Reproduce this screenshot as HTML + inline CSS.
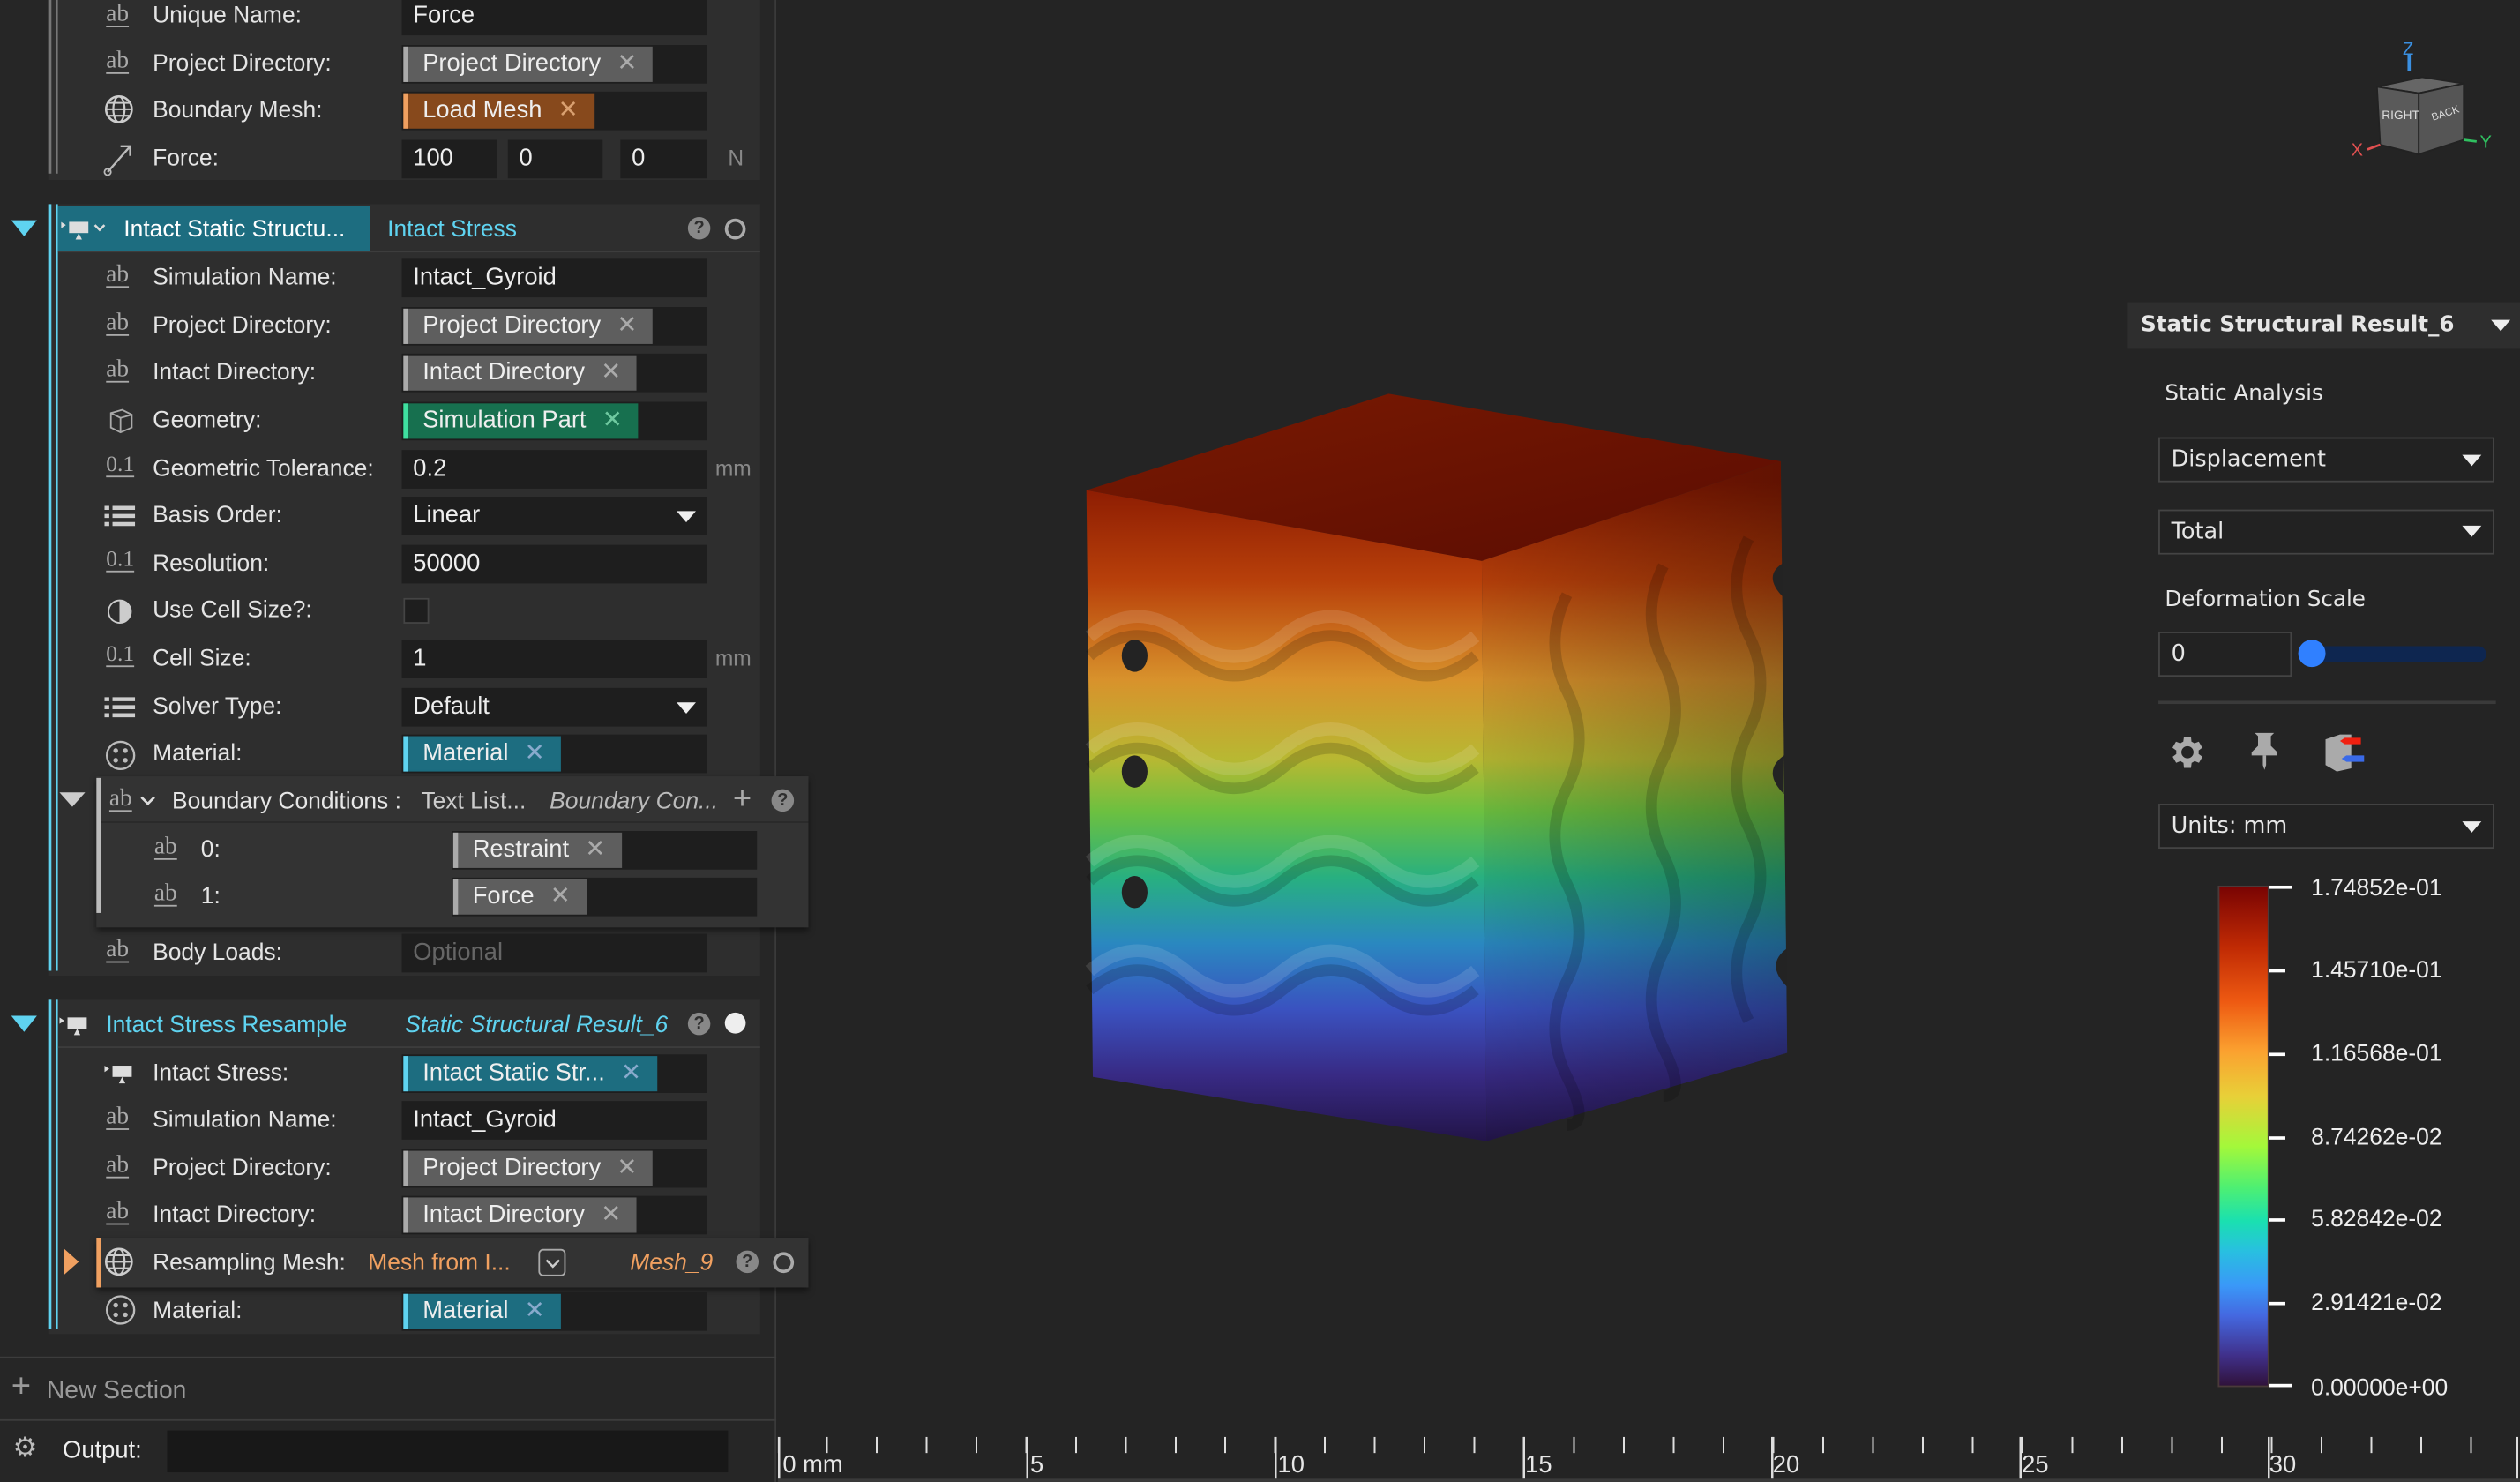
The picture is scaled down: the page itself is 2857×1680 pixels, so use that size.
<!DOCTYPE html>
<html><head><meta charset="utf-8"><style>
*{margin:0;padding:0;box-sizing:border-box}
html,body{width:2857px;height:1680px;overflow:hidden;background:#242424}
#s{position:absolute;left:0;top:0;width:1568px;height:922px;transform:scale(1.82207);transform-origin:0 0;font-family:"Liberation Sans",sans-serif;color:#e6e6e6;font-size:14.5px;background:#242424}
.a{position:absolute}
#lp{left:0;top:0;width:483px;height:922px;background:#262626;border-right:1px solid #3a3a3a}
.card{position:absolute;background:#2e2e2e}
.lb{position:absolute;left:95px;font-size:14.5px;color:#e4e4e4;white-space:nowrap}
.ic{position:absolute;left:66px;font-family:"Liberation Serif",serif;font-size:15px;color:#aaa;text-decoration:underline;text-underline-offset:3px}
.f{position:absolute;left:250px;width:190px;height:24px;background:#1e1e1e;padding-left:7px;line-height:24px;color:#eee;white-space:nowrap;font-size:15px}
.chip{position:absolute;left:251px;height:22px;line-height:22px;padding:0 10px 0 9px;border-left:3px solid #aaa;background:#5e5e5e;color:#eee;white-space:nowrap;font-size:15px}
.chip b{font-weight:normal;color:#aaa;margin-left:10px;font-size:15px}
.u{position:absolute;left:445px;color:#888;font-size:13.5px}
.dd{position:absolute;border:1px solid #444;background:#222;height:28px;line-height:26px;padding-left:7px;font-size:15px}
.tri{position:absolute;width:0;height:0;border-left:6px solid transparent;border-right:6px solid transparent;border-top:7px solid #eee}
.q{position:absolute;width:14px;height:14px;border-radius:50%;background:#888;color:#2e2e2e;font-size:11px;font-weight:bold;text-align:center;line-height:14px}
.o{position:absolute;width:13px;height:13px;border-radius:50%;border:2.5px solid #aaa}
.cb{position:absolute;left:1422px;width:10px;height:2px;background:#fff}
.cl{position:absolute;left:1438px;font-size:14.5px;color:#eee}
</style></head><body><div id="s">
<div id="lp" class="a"></div>
<div class="card" style="left:30px;top:0;width:443px;height:112px"></div>
<div class="a" style="left:30px;top:0;width:2px;height:108px;background:#777"></div>
<div class="a" style="left:35px;top:0;width:1px;height:108px;background:#777"></div>
<div class="card" style="left:30px;top:127px;width:443px;height:480px"></div>
<div class="a" style="left:30px;top:127px;width:2px;height:477px;background:#5fd3f0"></div>
<div class="a" style="left:35px;top:127px;width:1px;height:477px;background:#5fd3f0"></div>
<div class="a" style="left:36px;top:128px;width:194px;height:28px;background:#1d6d80"></div>
<div class="a" style="left:36px;top:156px;width:437px;height:1px;background:#3d3d3d"></div>
<div class="card" style="left:30px;top:622px;width:443px;height:208px"></div>
<div class="a" style="left:30px;top:622px;width:2px;height:205px;background:#5fd3f0"></div>
<div class="a" style="left:35px;top:622px;width:1px;height:205px;background:#5fd3f0"></div>
<div class="a" style="left:36px;top:651px;width:437px;height:1px;background:#3d3d3d"></div>

<span class="ic" style="top:1px">ab</span><span class="lb" style="top:2px">Unique Name:</span><div class="f" style="top:-2px">Force</div>
<span class="ic" style="top:30px">ab</span><span class="lb" style="top:32px">Project Directory:</span><div class="f" style="top:28px"></div><div class="chip" style="top:29px">Project Directory<b>✕</b></div>
<svg class="a" style="left:65px;top:59px" width="20" height="20"><circle cx="9" cy="9" r="8" stroke="#ccc" fill="none" stroke-width="1.4"/><ellipse cx="9" cy="9" rx="3.5" ry="8" stroke="#ccc" fill="none" stroke-width="1.2"/><path d="M1 9H17M2.5 5H15.5M2.5 13H15.5" stroke="#ccc" stroke-width="1.1"/></svg>
<span class="lb" style="top:61px">Boundary Mesh:</span><div class="f" style="top:57px"></div><div class="chip" style="top:58px;background:#87491c;border-color:#f0a060">Load Mesh<b style="color:#d9a070">✕</b></div>
<svg class="a" style="left:64px;top:88px" width="20" height="22"><path d="M3 19 L17 3 M11 3 H17 V9" stroke="#bbb" fill="none" stroke-width="1.3"/><circle cx="3" cy="19" r="2" stroke="#bbb" fill="none"/></svg>
<span class="lb" style="top:91px">Force:</span>
<div class="f" style="top:87px;width:59px">100</div><div class="f" style="top:87px;left:316px;width:59px">0</div><div class="f" style="top:87px;left:386px;width:54px">0</div><span class="u" style="top:91px;left:453px">N</span>

<div class="a" style="left:7px;top:137px;border-left:8px solid transparent;border-right:8px solid transparent;border-top:10px solid #5fd3f0"></div>
<svg class="a" style="left:38px;top:135px" width="30" height="16"><rect x="5" y="3" width="12" height="7" fill="#ddd"/><path d="M0 3 L3 5 L0 7Z M11 10 L9 14 H13Z" fill="#ddd"/><path d="M21 5 L24 8 L27 5" stroke="#ddd" fill="none" stroke-width="1.4"/></svg>
<span class="a" style="left:77px;top:135px;color:#fff">Intact Static Structu...</span>
<span class="a" style="left:241px;top:135px;color:#5fd3f0">Intact Stress</span>
<div class="q" style="left:428px;top:135px">?</div><div class="o" style="left:451px;top:136px"></div>

<span class="ic" style="top:163px">ab</span><span class="lb" style="top:165px">Simulation Name:</span><div class="f" style="top:161px">Intact_Gyroid</div>
<span class="ic" style="top:193px">ab</span><span class="lb" style="top:195px">Project Directory:</span><div class="f" style="top:191px"></div><div class="chip" style="top:192px">Project Directory<b>✕</b></div>
<span class="ic" style="top:222px">ab</span><span class="lb" style="top:224px">Intact Directory:</span><div class="f" style="top:220px"></div><div class="chip" style="top:221px">Intact Directory<b>✕</b></div>
<svg class="a" style="left:65px;top:252px" width="20" height="20"><path d="M4 5 L11 3 L17 6 L17 14 L10 17 L4 14Z M4 5 L10 8 L17 6 M10 8 V17" stroke="#aaa" fill="none"/></svg>
<span class="lb" style="top:254px">Geometry:</span><div class="f" style="top:250px"></div><div class="chip" style="top:251px;background:#17704f;border-color:#3fe0a0">Simulation Part<b style="color:#6fc9a0">✕</b></div>
<span class="ic" style="top:282px;font-size:14px">0.1</span><span class="lb" style="top:284px">Geometric Tolerance:</span><div class="f" style="top:280px">0.2</div><span class="u" style="top:284px">mm</span>
<svg class="a" style="left:65px;top:314px" width="20" height="16"><path d="M0 2H3M5 2H19M0 7H3M5 7H19M0 12H3M5 12H19" stroke="#ccc" stroke-width="2.5"/></svg>
<span class="lb" style="top:313px">Basis Order:</span><div class="f" style="top:309px">Linear</div><div class="tri" style="left:421px;top:318px"></div>
<span class="ic" style="top:341px;font-size:14px">0.1</span><span class="lb" style="top:343px">Resolution:</span><div class="f" style="top:339px">50000</div>
<div class="a" style="left:67px;top:373px;width:15px;height:15px;border-radius:50%;border:1.5px solid #ccc;background:linear-gradient(90deg,#2e2e2e 50%,#ccc 50%)"></div>
<span class="lb" style="top:372px">Use Cell Size?:</span><div class="a" style="left:251px;top:372px;width:16px;height:16px;background:#1e1e1e;border:1px solid #444"></div>
<span class="ic" style="top:400px;font-size:14px">0.1</span><span class="lb" style="top:402px">Cell Size:</span><div class="f" style="top:398px">1</div><span class="u" style="top:402px">mm</span>
<svg class="a" style="left:65px;top:433px" width="20" height="16"><path d="M0 2H3M5 2H19M0 7H3M5 7H19M0 12H3M5 12H19" stroke="#ccc" stroke-width="2.5"/></svg>
<span class="lb" style="top:432px">Solver Type:</span><div class="f" style="top:428px">Default</div><div class="tri" style="left:421px;top:437px"></div>
<svg class="a" style="left:65px;top:460px" width="20" height="20"><circle cx="10" cy="10" r="8.5" stroke="#bbb" fill="none" stroke-width="1.3"/><circle cx="7" cy="7" r="1.5" fill="#bbb"/><circle cx="13" cy="7" r="1.5" fill="#bbb"/><circle cx="7" cy="13" r="1.5" fill="#bbb"/><circle cx="13" cy="13" r="1.5" fill="#bbb"/></svg>
<span class="lb" style="top:461px">Material:</span><div class="f" style="top:457px"></div><div class="chip" style="top:458px;background:#1d6d80;border-color:#5fd3f0">Material<b style="color:#8ac">✕</b></div>

<div class="a" style="left:60px;top:483px;width:443px;height:94px;background:#333;box-shadow:0 2px 4px #0008"></div>
<div class="a" style="left:60px;top:484px;width:3px;height:84px;background:#bbb"></div>
<div class="a" style="left:63px;top:511px;width:440px;height:1px;background:#2a2a2a"></div>
<div class="a" style="left:37px;top:493px;border-left:8px solid transparent;border-right:8px solid transparent;border-top:9px solid #ccc"></div>
<span class="ic" style="left:68px;top:489px">ab</span><svg class="a" style="left:86px;top:493px" width="12" height="10"><path d="M2 3L6 7L10 3" stroke="#ddd" fill="none" stroke-width="1.5"/></svg>
<span class="a" style="left:107px;top:491px">Boundary Conditions :</span>
<span class="a" style="left:262px;top:491px;color:#ccc">Text List...</span>
<span class="a" style="left:342px;top:491px;color:#bbb;font-style:italic">Boundary Con...</span>
<span class="a" style="left:456px;top:486px;color:#aaa;font-size:20px">+</span><div class="q" style="left:480px;top:491px">?</div>
<span class="ic" style="left:96px;top:519px">ab</span><span class="a" style="left:125px;top:521px">0:</span><div class="f" style="left:281px;top:517px"></div><div class="chip" style="left:282px;top:518px">Restraint<b>✕</b></div>
<span class="ic" style="left:96px;top:548px">ab</span><span class="a" style="left:125px;top:550px">1:</span><div class="f" style="left:281px;top:546px"></div><div class="chip" style="left:282px;top:547px">Force<b>✕</b></div>

<span class="ic" style="top:583px">ab</span><span class="lb" style="top:585px">Body Loads:</span><div class="f" style="top:581px;color:#666">Optional</div>

<div class="a" style="left:7px;top:632px;border-left:8px solid transparent;border-right:8px solid transparent;border-top:10px solid #5fd3f0"></div>
<svg class="a" style="left:37px;top:630px" width="22" height="16"><rect x="5" y="3" width="12" height="7" fill="#ddd"/><path d="M0 3 L3 5 L0 7Z M11 10 L9 14 H13Z" fill="#ddd"/></svg>
<span class="a" style="left:66px;top:630px;color:#5fd3f0">Intact Stress Resample</span>
<span class="a" style="left:252px;top:630px;color:#5fd3f0;font-style:italic">Static Structural Result_6</span>
<div class="q" style="left:428px;top:630px">?</div><div class="a" style="left:451px;top:630px;width:13px;height:13px;border-radius:50%;background:#eee"></div>
<svg class="a" style="left:65px;top:660px" width="22" height="16"><rect x="5" y="3" width="12" height="7" fill="#ddd"/><path d="M0 3 L3 5 L0 7Z M11 10 L9 14 H13Z" fill="#ddd"/></svg>
<span class="lb" style="top:660px">Intact Stress:</span><div class="f" style="top:656px"></div><div class="chip" style="top:657px;background:#1d6d80;border-color:#5fd3f0">Intact Static Str...<b style="color:#8ac">✕</b></div>
<span class="ic" style="top:687px">ab</span><span class="lb" style="top:689px">Simulation Name:</span><div class="f" style="top:685px">Intact_Gyroid</div>
<span class="ic" style="top:717px">ab</span><span class="lb" style="top:719px">Project Directory:</span><div class="f" style="top:715px"></div><div class="chip" style="top:716px">Project Directory<b>✕</b></div>
<span class="ic" style="top:746px">ab</span><span class="lb" style="top:748px">Intact Directory:</span><div class="f" style="top:744px"></div><div class="chip" style="top:745px">Intact Directory<b>✕</b></div>
<div class="a" style="left:60px;top:770px;width:443px;height:31px;background:#333;box-shadow:0 2px 4px #0008"></div>
<div class="a" style="left:60px;top:770px;width:3px;height:31px;background:#f0a060"></div>
<div class="a" style="left:40px;top:777px;border-top:8px solid transparent;border-bottom:8px solid transparent;border-left:9px solid #f0a060"></div>
<svg class="a" style="left:65px;top:776px" width="20" height="20"><circle cx="9" cy="9" r="8" stroke="#ccc" fill="none" stroke-width="1.4"/><ellipse cx="9" cy="9" rx="3.5" ry="8" stroke="#ccc" fill="none" stroke-width="1.2"/><path d="M1 9H17M2.5 5H15.5M2.5 13H15.5" stroke="#ccc" stroke-width="1.1"/></svg>
<span class="lb" style="top:778px">Resampling Mesh:</span>
<span class="a" style="left:229px;top:778px;color:#f0a060">Mesh from I...</span>
<div class="a" style="left:335px;top:777px;width:17px;height:17px;border:1.3px solid #aaa;border-radius:3px"></div><svg class="a" style="left:338px;top:781px" width="12" height="10"><path d="M2 3L6 7L10 3" stroke="#ccc" fill="none" stroke-width="1.4"/></svg>
<span class="a" style="left:392px;top:778px;color:#f0a060;font-style:italic">Mesh_9</span>
<div class="q" style="left:458px;top:778px">?</div><div class="o" style="left:481px;top:779px"></div>
<svg class="a" style="left:65px;top:805px" width="20" height="20"><circle cx="10" cy="10" r="8.5" stroke="#bbb" fill="none" stroke-width="1.3"/><circle cx="7" cy="7" r="1.5" fill="#bbb"/><circle cx="13" cy="7" r="1.5" fill="#bbb"/><circle cx="7" cy="13" r="1.5" fill="#bbb"/><circle cx="13" cy="13" r="1.5" fill="#bbb"/></svg>
<span class="lb" style="top:808px">Material:</span><div class="f" style="top:804px"></div><div class="chip" style="top:805px;background:#1d6d80;border-color:#5fd3f0">Material<b style="color:#8ac">✕</b></div>

<div class="a" style="left:0;top:844px;width:483px;height:1px;background:#3c3c3c"></div>
<span class="a" style="left:7px;top:853px;color:#999;font-size:21px;line-height:20px">+</span>
<span class="a" style="left:29px;top:857px;color:#999;font-size:15.5px">New Section</span>
<div class="a" style="left:0;top:883px;width:483px;height:1px;background:#3c3c3c"></div>
<span class="a" style="left:8px;top:891px;color:#bbb;font-size:17px">⚙</span>
<span class="a" style="left:39px;top:894px;color:#eee;font-size:15px">Output:</span>
<div class="a" style="left:104px;top:890px;width:349px;height:26px;background:#181818"></div>

<div class="a" style="left:484px;top:894px;width:1084px;height:10px;background:repeating-linear-gradient(90deg,transparent 0,transparent 29.9px,#ddd 29.9px,#ddd 31px)"></div>
<div class="a" style="left:484px;top:894px;width:1084px;height:26px;background:repeating-linear-gradient(90deg,#ddd 0,#ddd 1.3px,transparent 1.3px,transparent 154.5px)"></div>
<span class="a" style="left:487px;top:903px;font-size:15px">0 mm</span>
<span class="a" style="left:641px;top:903px;font-size:15px">5</span>
<span class="a" style="left:795px;top:903px;font-size:15px">10</span>
<span class="a" style="left:949px;top:903px;font-size:15px">15</span>
<span class="a" style="left:1103px;top:903px;font-size:15px">20</span>
<span class="a" style="left:1258px;top:903px;font-size:15px">25</span>
<span class="a" style="left:1412px;top:903px;font-size:15px">30</span>
<div class="a" style="left:484px;top:920px;width:1084px;height:2px;background:#3a3a3a"></div>

<svg class="a" style="left:0;top:0" width="1568" height="922">
<defs>
<linearGradient id="g" x1="0" y1="300" x2="0" y2="710" gradientUnits="userSpaceOnUse">
<stop offset="0" stop-color="#8a1a02"/><stop offset="0.15" stop-color="#b8400a"/><stop offset="0.3" stop-color="#d8922c"/><stop offset="0.42" stop-color="#b8b832"/><stop offset="0.5" stop-color="#6cc040"/><stop offset="0.6" stop-color="#28b080"/><stop offset="0.7" stop-color="#2a88c0"/><stop offset="0.8" stop-color="#3a52c0"/><stop offset="0.9" stop-color="#382a84"/><stop offset="1" stop-color="#221448"/></linearGradient>
<linearGradient id="t" x1="0" y1="0" x2="1" y2="1"><stop offset="0" stop-color="#7a1a02"/><stop offset="1" stop-color="#5a0c02"/></linearGradient>
<linearGradient id="sh" x1="0" y1="0" x2="1" y2="0"><stop offset="0" stop-color="#000" stop-opacity="0.05"/><stop offset="1" stop-color="#000" stop-opacity="0.3"/></linearGradient>
</defs>
<path d="M676 305 L864 245 L1108 287 L922 349Z" fill="url(#t)"/>
<path d="M676 305 L922 349 L925 710 L680 670Z" fill="url(#g)"/>
<path d="M922 349 L1108 287 L1112 655 L925 710Z" fill="url(#g)"/>
<path d="M922 349 L1108 287 L1112 655 L925 710Z" fill="url(#sh)"/>
<g fill="none" stroke="#fff" stroke-opacity="0.12" stroke-width="8">
<path d="M678 396 q30 -25 60 0 t60 0 t60 0 t60 0"/>
<path d="M678 466 q30 -25 60 0 t60 0 t60 0 t60 0"/>
<path d="M678 536 q30 -25 60 0 t60 0 t60 0 t60 0"/>
<path d="M678 604 q30 -25 60 0 t60 0 t60 0 t60 0"/>
</g>
<g fill="none" stroke="#000" stroke-opacity="0.16" stroke-width="7">
<path d="M678 408 q30 -25 60 0 t60 0 t60 0 t60 0"/>
<path d="M678 478 q30 -25 60 0 t60 0 t60 0 t60 0"/>
<path d="M678 548 q30 -25 60 0 t60 0 t60 0 t60 0"/>
<path d="M678 616 q30 -25 60 0 t60 0 t60 0 t60 0"/>
<path d="M975 370 q-15 30 0 60 t0 60 t0 60 t0 60 t0 60 t0 30"/>
<path d="M1035 352 q-15 30 0 60 t0 60 t0 60 t0 60 t0 60 t0 30"/>
<path d="M1088 335 q-15 30 0 60 t0 60 t0 60 t0 60 t0 60"/>
</g>
<g fill="#232323">
<ellipse cx="706" cy="408" rx="8" ry="10"/><ellipse cx="706" cy="480" rx="8" ry="10"/><ellipse cx="706" cy="555" rx="8" ry="10"/>
<path d="M1110 350 q-14 8 0 22Z"/><path d="M1110 470 q-14 10 0 24Z"/><path d="M1112 590 q-14 10 0 24Z"/>
</g>
</svg>

<svg class="a" style="left:1455px;top:20px" width="100" height="80">
<line x1="44" y1="24" x2="44" y2="14" stroke="#3a8fe0" stroke-width="2"/>
<text x="40" y="14" fill="#3a8fe0" font-size="11" font-family="Liberation Sans">Z</text>
<path d="M24 34 L52 28 L78 32 L50 38Z" fill="#666" stroke="#222"/>
<path d="M24 34 L50 38 L50 76 L26 70Z" fill="#5a5a5a" stroke="#222"/>
<path d="M50 38 L78 32 L78 67 L50 76Z" fill="#555" stroke="#222"/>
<text x="27" y="54" fill="#ddd" font-size="7.5" font-family="Liberation Sans">RIGHT</text>
<text x="58" y="54" fill="#ddd" font-size="6.5" font-family="Liberation Sans" transform="rotate(-18 62 52)">BACK</text>
<line x1="26" y1="70" x2="18" y2="73" stroke="#e05050" stroke-width="1.5"/>
<text x="8" y="77" fill="#e05050" font-size="11" font-family="Liberation Sans">X</text>
<line x1="78" y1="67" x2="86" y2="68" stroke="#30c060" stroke-width="1.5"/>
<text x="88" y="72" fill="#30c060" font-size="11" font-family="Liberation Sans">Y</text>
</svg>

<div class="a" style="left:1324px;top:188px;width:244px;height:29px;background:#2e2e2e"></div>
<span class="a" style="left:1332px;top:194px;font-weight:bold;font-family:'DejaVu Sans',sans-serif;font-size:13.5px">Static Structural Result_6</span>
<div class="tri" style="left:1550px;top:199px"></div>
<span class="a" style="left:1347px;top:237px;font-family:'DejaVu Sans',sans-serif;font-size:13.5px">Static Analysis</span>
<div class="dd" style="left:1343px;top:272px;width:209px;font-family:'DejaVu Sans',sans-serif;font-size:14px">Displacement</div><div class="tri" style="left:1532px;top:283px"></div>
<div class="dd" style="left:1343px;top:317px;width:209px;font-family:'DejaVu Sans',sans-serif;font-size:14px">Total</div><div class="tri" style="left:1532px;top:327px"></div>
<span class="a" style="left:1347px;top:365px;font-family:'DejaVu Sans',sans-serif;font-size:13.5px">Deformation Scale</span>
<div class="dd" style="left:1343px;top:393px;width:83px;font-family:'DejaVu Sans',sans-serif;font-size:14px">0</div>
<div class="a" style="left:1437px;top:402px;width:110px;height:10px;border-radius:5px;background:#0e2650"></div>
<div class="a" style="left:1430px;top:398px;width:17px;height:17px;border-radius:50%;background:#3080ff"></div>
<div class="a" style="left:1343px;top:436px;width:210px;height:2px;background:#3a3a3a"></div>
<svg class="a" style="left:1347px;top:455px" width="26" height="26" viewBox="0 0 24 24"><path fill="#aaa" d="M19.4 13a7.5 7.5 0 0 0 0-2l2.1-1.6-2-3.5-2.5 1a7 7 0 0 0-1.7-1L15 3h-4l-.4 2.9a7 7 0 0 0-1.7 1l-2.5-1-2 3.5L6.6 11a7.5 7.5 0 0 0 0 2l-2.1 1.6 2 3.5 2.5-1a7 7 0 0 0 1.7 1L11 21h4l.4-2.9a7 7 0 0 0 1.7-1l2.5 1 2-3.5zM13 15.5a3.5 3.5 0 1 1 0-7 3.5 3.5 0 0 1 0 7z"/></svg>
<svg class="a" style="left:1398px;top:455px" width="22" height="28"><path d="M5 1H17L15 3V9L19 13V15H3V13L7 9V3Z" fill="#aaa"/><path d="M10 15H12V21L11 24L10 21Z" fill="#aaa"/></svg>
<svg class="a" style="left:1444px;top:454px" width="30" height="28"><path d="M3 6L12 3H19V24L10 26L3 22Z" fill="#aaa"/><path d="M15 5H25V9H15L12 7Z" fill="#f02010"/><path d="M16 16H27V20H16L13 18Z" fill="#3a6ae8"/></svg>
<div class="dd" style="left:1343px;top:500px;width:209px;font-family:'DejaVu Sans',sans-serif;font-size:14px">Units: mm</div><div class="tri" style="left:1532px;top:511px"></div>

<div class="a" style="left:1380px;top:551px;width:32px;height:312px;border:1px solid #4a3a3a;background:linear-gradient(180deg,#7a0403,#c02a04 12%,#ee5a12 23%,#fba230 33%,#e8d038 42%,#a4f83a 52%,#50f070 60%,#1ae0b0 67%,#28c0e0 73%,#3a98f8 80%,#4468e0 86%,#40308a 94%,#30123b)"></div>
<div class="cb" style="left:1412px;top:551px;width:14px"></div><span class="cl" style="top:545px">1.74852e-01</span>
<div class="cb" style="left:1412px;top:603px"></div><span class="cl" style="top:596px">1.45710e-01</span>
<div class="cb" style="left:1412px;top:655px"></div><span class="cl" style="top:648px">1.16568e-01</span>
<div class="cb" style="left:1412px;top:707px"></div><span class="cl" style="top:700px">8.74262e-02</span>
<div class="cb" style="left:1412px;top:758px"></div><span class="cl" style="top:751px">5.82842e-02</span>
<div class="cb" style="left:1412px;top:810px"></div><span class="cl" style="top:803px">2.91421e-02</span>
<div class="cb" style="left:1412px;top:861px;width:14px"></div><span class="cl" style="top:856px">0.00000e+00</span>
</div></body></html>
